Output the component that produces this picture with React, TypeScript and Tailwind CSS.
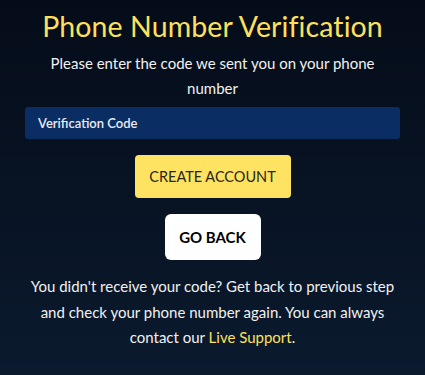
import React from 'react';

export default function App() {
  return (
    <div className="min-h-[375px] w-full bg-gradient-to-b from-[#050c19] to-[#0b1a2e] font-['Lato','Noto_Sans',sans-serif] text-white">
      <div className="flex flex-col items-center px-[25px] pt-[8px]">
        <h1 className="text-[28.5px] leading-[36px] text-[#fde15c] tracking-[0.1px]">Phone Number Verification</h1>
        <p className="mt-[7px] text-center text-[15px] leading-[25px] text-[#f1f1f1] px-[20px]">
          Please enter the code we sent you on your phone number
        </p>
        <input
          className="mt-[6px] h-[32px] w-full rounded-[3px] bg-[#0a2d63] px-[13px] text-[13px] font-semibold text-white outline-none placeholder:text-[#e8ecf3]"
          placeholder="Verification Code"
        />
        <button className="mt-[16px] h-[43px] w-[156px] rounded-[4px] bg-[#fee363] text-[14.5px] uppercase text-[#2a2615]">
          Create Account
        </button>
        <button className="mt-[16px] h-[46px] w-[96px] rounded-[6px] bg-white text-[15px] font-bold uppercase text-black">
          Go Back
        </button>
        <p className="mt-[14px] text-center text-[15px] leading-[25.5px] text-[#f1f1f1]">
          You didn't receive your code? Get back to previous step and check your phone number again. You can always contact our{' '}
          <a className="text-[#fde15c]">Live Support</a>.
        </p>
      </div>
    </div>
  );
}
